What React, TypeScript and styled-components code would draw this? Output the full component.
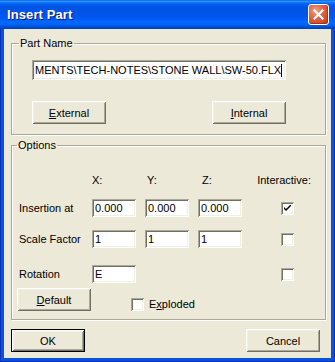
import React from "react";
import styled, { createGlobalStyle } from "styled-components";

const Global = createGlobalStyle`
  html, body { margin: 0; padding: 0; background: #ffffff; }
  body { font-family: "Liberation Sans", Arial, sans-serif; font-size: 11px; color: #000; }
  * { box-sizing: border-box; }
`;

const Window = styled.div`
  width: 335px;
  height: 362px;
  display: flex;
  flex-direction: column;
  background: #0653e0;
  box-shadow: inset 1px 0 #0831b8, inset -1px 0 #0831b8, inset 0 -1px #0831b8;
`;

const TitleBar = styled.div`
  height: 29px;
  flex: none;
  display: flex;
  align-items: center;
  justify-content: space-between;
  padding: 0 6px 0 7px;
  background: linear-gradient(
    to bottom,
    #0058ee 0%,
    #3593ff 4%,
    #288eff 6%,
    #127dff 8%,
    #036ffc 10%,
    #0262ee 14%,
    #0057e5 20%,
    #0054e3 24%,
    #0055eb 56%,
    #005bf5 66%,
    #026afe 76%,
    #0062ef 86%,
    #0052d6 92%,
    #0046c8 96%,
    #0040b8 100%
  );
`;

const Title = styled.span`
  font-family: "Liberation Sans", Arial, sans-serif;
  font-weight: bold;
  font-size: 13px;
  color: #ffffff;
  text-shadow: 1px 1px #0a1883;
  letter-spacing: 0.1px;
`;

const CloseButton = styled.div`
  width: 21px;
  height: 21px;
  border: 1px solid #ffffff;
  border-radius: 3px;
  display: flex;
  align-items: center;
  justify-content: center;
  background: radial-gradient(circle at 35% 30%, #f0a08a 0%, #e0603e 45%, #c83a14 100%);
  box-shadow: inset -1px -1px 1px rgba(120, 20, 0, 0.5);
`;

const Body = styled.div`
  flex: 1;
  margin: 0 4px 4px 4px;
  background: #ece9d8;
  padding: 8px 5px 5px 7px;
  display: flex;
  flex-direction: column;
`;

const GroupBox = styled.fieldset<{ $mt?: number }>`
  margin: ${(p) => p.$mt ?? 0}px 0 0 0;
  padding: 0;
  min-width: 0;
  border: 1px solid #aca899;
  box-shadow: inset 1px 1px #ffffff, 1px 1px #ffffff;
`;

const Legend = styled.legend<{ $ml: number }>`
  margin-left: ${(p) => p.$ml}px;
  padding: 0 1px;
  font-size: 11px;
  line-height: 13px;
`;

const PartContent = styled.div`
  padding: 10px 0 10px 20px;
  display: flex;
  flex-direction: column;
  gap: 21px;
`;

const TextBox = styled.div<{ $w: number; $h?: number }>`
  width: ${(p) => p.$w}px;
  height: ${(p) => p.$h ?? 18}px;
  background: #ffffff;
  box-shadow: inset 1px 1px #aca899, inset -1px -1px #ffffff, inset 2px 2px #716f64,
    inset -2px -2px #f1efe2;
  padding: 0 3px;
  display: flex;
  align-items: center;
  font-size: 11px;
  white-space: nowrap;
  overflow: hidden;
`;

const Caret = styled.span`
  display: inline-block;
  width: 1px;
  height: 13px;
  background: #000;
`;

const ButtonPair = styled.div`
  width: 254px;
  display: flex;
  justify-content: space-between;
`;

const Button = styled.div<{ $default?: boolean }>`
  width: 74px;
  height: 23px;
  display: flex;
  align-items: center;
  justify-content: center;
  background: #ece9d8;
  font-size: 11px;
  border: ${(p) => (p.$default ? "1px solid #000000" : "none")};
  box-shadow: inset 1px 1px #ffffff, inset -1px -1px #716f64, inset 2px 2px #f1efe2,
    inset -2px -2px #aca899;
`;

const OptContent = styled.div`
  padding: 22px 0 8px 5px;
  display: flex;
  flex-direction: column;
`;

const OptRow = styled.div<{ $mt?: number }>`
  display: grid;
  grid-template-columns: 66px 44px 44px 44px 60px;
  column-gap: 9px;
  align-items: center;
  margin-top: ${(p) => p.$mt ?? 0}px;
`;

const Header = styled.span<{ $shift?: number }>`
  line-height: 13px;
  padding-left: ${(p) => p.$shift ?? 0}px;
`;

const InteractiveHeader = styled.span`
  line-height: 13px;
  justify-self: end;
`;

const RowLabel = styled.span`
  padding-left: 2px;
  line-height: 13px;
  white-space: nowrap;
`;

const CheckBox = styled.div<{ $ml?: number }>`
  width: 13px;
  height: 13px;
  background: #ffffff;
  box-shadow: inset 1px 1px #aca899, inset -1px -1px #ffffff, inset 2px 2px #716f64,
    inset -2px -2px #f1efe2;
  display: flex;
  align-items: center;
  justify-content: center;
  margin-left: ${(p) => p.$ml ?? 0}px;
`;

const BottomRow = styled.div`
  display: flex;
  align-items: flex-start;
  margin-top: 5px;
`;

const CheckField = styled.label`
  display: flex;
  align-items: center;
  gap: 5px;
  margin: 10px 0 0 40px;
  line-height: 13px;
`;

const DialogButtons = styled.div`
  display: flex;
  justify-content: space-between;
  margin-top: 9px;
  padding-right: 6px;
`;

const Tick = () => (
  <svg width="7" height="7" viewBox="0 0 7 7">
    <path d="M0 2 L0 4 L2 6 L7 1 L7 -1 L2 4 Z" fill="#000" />
  </svg>
);

const CloseX = () => (
  <svg width="11" height="11" viewBox="0 0 11 11">
    <path d="M1.5 1.5 L9.5 9.5 M9.5 1.5 L1.5 9.5" stroke="#fff" strokeWidth="2.2" strokeLinecap="square" />
  </svg>
);

export default function App() {
  return (
    <>
      <Global />
      <Window>
        <TitleBar>
          <Title>Insert Part</Title>
          <CloseButton>
            <CloseX />
          </CloseButton>
        </TitleBar>
        <Body>
          <GroupBox>
            <Legend $ml={7}>Part Name</Legend>
            <PartContent>
              <TextBox $w={254} $h={20}>
                MENTS\TECH-NOTES\STONE WALL\SW-50.FLX
                <Caret />
              </TextBox>
              <ButtonPair>
                <Button>
                  <span>
                    <u>E</u>xternal
                  </span>
                </Button>
                <Button>
                  <span>
                    <u>I</u>nternal
                  </span>
                </Button>
              </ButtonPair>
            </PartContent>
          </GroupBox>
          <GroupBox $mt={4}>
            <Legend $ml={5}>Options</Legend>
            <OptContent>
              <OptRow>
                <span />
                <Header>X:</Header>
                <Header $shift={2}>Y:</Header>
                <Header $shift={4}>Z:</Header>
                <InteractiveHeader>Interactive:</InteractiveHeader>
              </OptRow>
              <OptRow $mt={12}>
                <RowLabel>Insertion at</RowLabel>
                <TextBox $w={44}>0.000</TextBox>
                <TextBox $w={44}>0.000</TextBox>
                <TextBox $w={44}>0.000</TextBox>
                <CheckBox $ml={30}>
                  <Tick />
                </CheckBox>
              </OptRow>
              <OptRow $mt={13}>
                <RowLabel>Scale Factor</RowLabel>
                <TextBox $w={44}>1</TextBox>
                <TextBox $w={44}>1</TextBox>
                <TextBox $w={44}>1</TextBox>
                <CheckBox $ml={30} />
              </OptRow>
              <OptRow $mt={17}>
                <RowLabel>Rotation</RowLabel>
                <TextBox $w={44}>E</TextBox>
                <span />
                <span />
                <CheckBox $ml={30} />
              </OptRow>
              <BottomRow>
                <Button>
                  <span>
                    <u>D</u>efault
                  </span>
                </Button>
                <CheckField>
                  <CheckBox />
                  <span>
                    E<u>x</u>ploded
                  </span>
                </CheckField>
              </BottomRow>
            </OptContent>
          </GroupBox>
          <DialogButtons>
            <Button $default>OK</Button>
            <Button>Cancel</Button>
          </DialogButtons>
        </Body>
      </Window>
    </>
  );
}
